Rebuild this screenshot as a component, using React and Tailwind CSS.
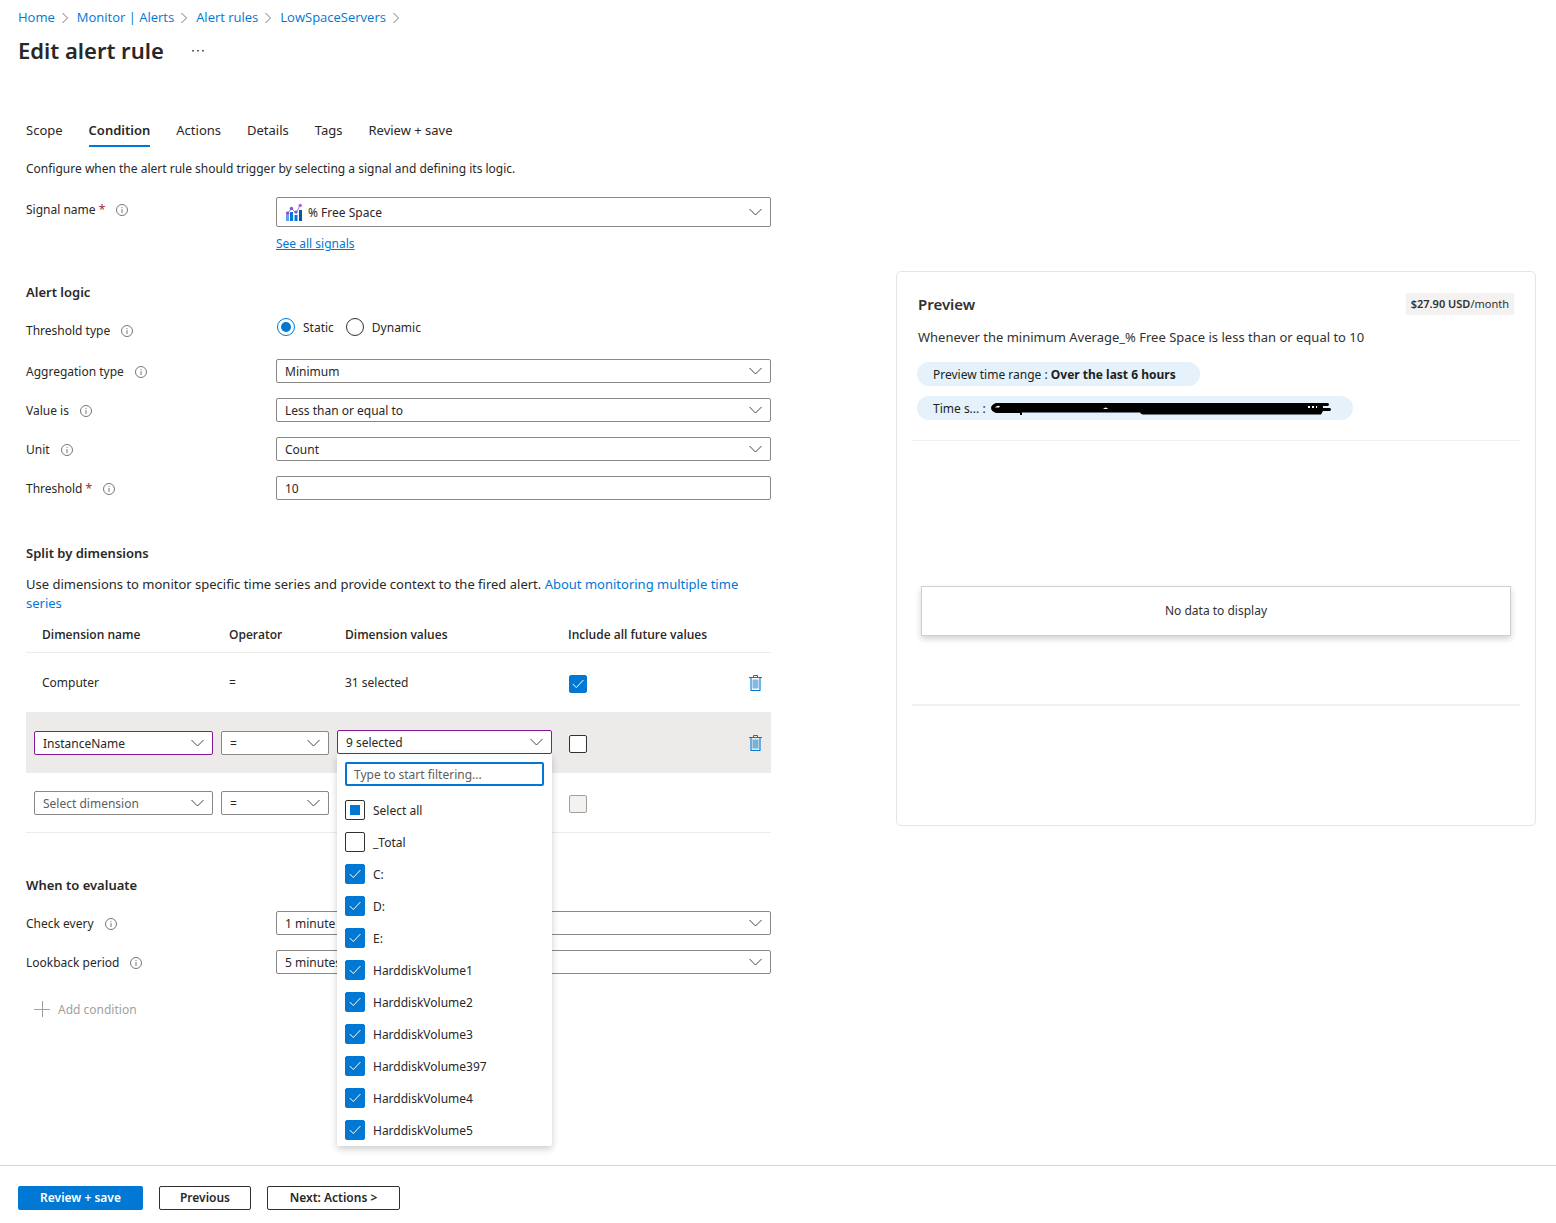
import { useEffect, useRef } from "react";

const breadcrumbs = ["Home", "Monitor | Alerts", "Alert rules", "LowSpaceServers"];

const tabs = ["Scope", "Condition", "Actions", "Details", "Tags", "Review + save"];

const dimensionValues = [
  { name: "Select all", mixed: true },
  { name: "_Total", checked: false },
  { name: "C:", checked: true },
  { name: "D:", checked: true },
  { name: "E:", checked: true },
  { name: "HarddiskVolume1", checked: true },
  { name: "HarddiskVolume2", checked: true },
  { name: "HarddiskVolume3", checked: true },
  { name: "HarddiskVolume397", checked: true },
  { name: "HarddiskVolume4", checked: true },
  { name: "HarddiskVolume5", checked: true },
];

/* ---------- Icons ---------- */

const ChevronDown = ({ className = "" }) => (
  <svg className={`h-[14px] w-[14px] pointer-events-none ${className}`} viewBox="0 0 14 14" fill="none" stroke="#484644" aria-hidden="true">
    <path d="M0.5 4 6.5 10l6-6" />
  </svg>
);

const ChevronRight = () => (
  <svg className="h-3 w-[7px]" viewBox="0 0 7 12" fill="none" stroke="#797775" aria-hidden="true">
    <path d="M0.5 2 5.5 7 0.5 12" />
  </svg>
);

const InfoIcon = () => (
  <svg className="h-3 w-3 shrink-0" viewBox="0 0 12 12" fill="none" stroke="#797775" aria-hidden="true">
    <circle cx="6" cy="6" r="5.5" />
    <path d="M6 5v4M6 3v1" />
  </svg>
);

const MetricIcon = () => (
  <svg className="h-[18px] w-4" viewBox="0 0 16 18" aria-hidden="true">
    <path fill="#5ea0ef" d="M0 12h3v6H0z" />
    <path fill="#0078d4" d="M4 9h3v9H4z" />
    <path fill="#0078d4" d="M8.5 12h3v6h-3z" />
    <path fill="#005ba1" d="M13 7h3v11h-3z" />
    <path fill="none" stroke="#a067e8" d="M1.5 10.5 5.5 5.5l4.500 4.500 4-7.500" />
    <circle cx="1.6" cy="10.3" r="1.7" fill="#8a4fdb" />
    <circle cx="5.5" cy="5.5" r="1.7" fill="#8a4fdb" />
    <circle cx="10" cy="9.1" r="1.7" fill="#8a4fdb" />
    <circle cx="14.2" cy="2.4" r="1.7" fill="#a067e8" />
  </svg>
);

const TrashIcon = () => (
  <svg className="h-4 w-[13px]" viewBox="0 0 13 16" fill="none" aria-hidden="true">
    <path fill="#0078d4" fillOpacity="0.5" d="M3.5 4.5h6v9h-6z" />
    <path stroke="#0078d4" strokeOpacity="0.55" strokeWidth="2" d="M2 3v12M11 3v12" />
    <path stroke="#0078d4" d="M0 2.5h13M4.5 2V.5h4V2M1.5 15.5h10" />
  </svg>
);

/* ---------- Controls ---------- */

const Label = ({ htmlFor, required, children }) => (
  <div className="flex w-[250px] shrink-0 items-center gap-[11px] pt-0.5">
    <label htmlFor={htmlFor}>
      {children}
      {required && <span className="text-[#a4262c]"> *</span>}
    </label>
    <InfoIcon />
  </div>
);

function Select({ id, label, value, border = "border-[#8a8886]", color = "text-[#292827]", className = "" }) {
  return (
    <div className={`relative flex h-6 items-center ${className}`}>
      <select
        id={id}
        aria-label={label}
        defaultValue={value}
        className={`h-full w-full appearance-none rounded-[2px] border bg-white pt-0.5 pr-8 pl-2 ${border} ${color}`}
      >
        <option>{value}</option>
      </select>
      <ChevronDown className="absolute right-2" />
    </div>
  );
}

function Checkbox({ size = "size-5", mixed, ...props }) {
  const ref = useRef(null);

  useEffect(() => {
    ref.current.indeterminate = Boolean(mixed);
  }, [mixed]);

  return (
    <span className={`inline-grid place-items-center ${size}`}>
      <input
        ref={ref}
        type="checkbox"
        className="peer col-start-1 row-start-1 size-full appearance-none rounded-[2px] border border-[#323130] bg-white checked:border-[#0078d4] checked:bg-[#0078d4] disabled:border-[#a19f9d] disabled:bg-[#f3f2f1]"
        {...props}
      />
      {mixed && <span className="pointer-events-none col-start-1 row-start-1 size-[10px] bg-[#0078d4]" />}
      <svg className="pointer-events-none col-start-1 row-start-1 hidden h-[10px] w-3 peer-checked:block" viewBox="0 0 12 10" fill="none" stroke="#fff" aria-hidden="true">
        <path d="M0.8 5 4.3 8.6 11.4 1" />
      </svg>
    </span>
  );
}

const Radio = ({ label, ...props }) => (
  <label className="flex items-center gap-2">
    <span className="grid size-[18px] place-items-center">
      <input
        type="radio"
        className="peer col-start-1 row-start-1 size-full appearance-none rounded-full border border-[#323130] checked:border-[#0078d4]"
        {...props}
      />
      <span className="pointer-events-none col-start-1 row-start-1 hidden size-[10px] rounded-full bg-[#0078d4] peer-checked:block" />
    </span>
    <span className="pt-0.5">{label}</span>
  </label>
);

const DimensionMenu = () => (
  <div className="absolute top-full right-0 left-2 z-10 rounded-b-[2px] bg-white px-2 pt-2 shadow-[0_3px_7px_rgba(0,0,0,0.2)]">
    <input
      type="text"
      aria-label="Filter dimension values"
      placeholder="Type to start filtering..."
      className="mb-2 block h-6 w-full rounded-[2px] border-2 border-[#0078d4] px-[7px] placeholder:text-[#605e5c]"
    />
    {dimensionValues.map((item) => (
      <label key={item.name} className="flex h-8 items-center gap-2">
        <Checkbox mixed={item.mixed} defaultChecked={item.checked} />
        <span className="pt-0.5">{item.name}</span>
      </label>
    ))}
  </div>
);

function DimensionsTable() {
  return (
    <table className="w-full table-fixed text-left">
      <colgroup>
        <col className="w-[187px]" />
        <col className="w-[116px]" />
        <col className="w-[223px]" />
        <col />
        <col className="w-[50px]" />
      </colgroup>
      <thead className="font-['Open_Sans',sans-serif]">
        <tr className="h-9 border-b border-[#edebe9]">
          <th className="pt-0.5 pl-4 font-semibold">Dimension name</th>
          <th className="pt-0.5 pl-4 font-semibold">Operator</th>
          <th className="pt-0.5 pl-4 font-semibold">Dimension values</th>
          <th className="pt-0.5 pl-4 font-semibold">Include all future values</th>
          <td />
        </tr>
      </thead>
      <tbody>
        <tr className="h-[60px] border-b border-[#edebe9]">
          <td className="pt-0.5 pl-4">Computer</td>
          <td className="pt-0.5 pl-4">=</td>
          <td className="pt-0.5 pl-4">31 selected</td>
          <td className="pt-1 pl-[17px]">
            <div className="flex">
              <Checkbox size="size-[18px]" aria-label="Include all future Computer values" defaultChecked />
            </div>
          </td>
          <td className="pt-0.5 pr-[9px]">
            <button type="button" aria-label="Delete Computer" className="ml-auto block">
              <TrashIcon />
            </button>
          </td>
        </tr>
        <tr className="h-[60px] border-b border-[#edebe9] bg-[#edebe9]">
          <td className="pt-0.5 pl-2">
            <Select label="Dimension name" value="InstanceName" border="border-[#881798]" />
          </td>
          <td className="pt-0.5 pl-2">
            <Select label="Operator" value="=" />
          </td>
          <td>
            <div className="relative pl-2">
              <button
                type="button"
                aria-expanded="true"
                className="flex h-6 w-full items-center justify-between rounded-[2px] border border-[#881798] bg-white pr-[7px] pl-2"
              >
                <span className="pt-0.5">9 selected</span>
                <ChevronDown />
              </button>
              <DimensionMenu />
            </div>
          </td>
          <td className="pt-1 pl-[17px]">
            <div className="flex">
              <Checkbox size="size-[18px]" aria-label="Include all future InstanceName values" />
            </div>
          </td>
          <td className="pt-0.5 pr-[9px]">
            <button type="button" aria-label="Delete InstanceName" className="ml-auto block">
              <TrashIcon />
            </button>
          </td>
        </tr>
        <tr className="h-[60px] border-b border-[#edebe9]">
          <td className="pt-0.5 pl-2">
            <Select label="Dimension name" value="Select dimension" color="text-[#605e5c]" />
          </td>
          <td className="pt-0.5 pl-2">
            <Select label="Operator" value="=" />
          </td>
          <td />
          <td className="pt-1 pl-[17px]">
            <div className="flex">
              <Checkbox size="size-[18px]" aria-label="Include all future values" disabled />
            </div>
          </td>
          <td />
        </tr>
      </tbody>
    </table>
  );
}

/* ---------- Preview ---------- */

// Marker strokes that hide the time series name
const Redaction = () => (
  <svg className="h-[14px] w-[341px]" viewBox="0 0 341 14" role="img" aria-label="Redacted">
    <path d="M5 1H337q2 1.5 0 3h-5v2h7q2 1.5 0 3h-7l-2 3.500H152q-2 0-3-2H31v2.500h-2V11H5Q0 9 0 6T5 1Z" />
    <path fill="#fff" d="M4 5.5q3-3 5-1l-1 1ZM112 7q3-3 5 0ZM317 4h2v2h-2ZM321 4h2v2h-2ZM325 4h1v2h-1Z" />
  </svg>
);

const Preview = () => (
  <aside className="mt-[124px] h-[555px] w-[640px] shrink-0 rounded-[5px] border border-[#e5e5e5] px-[15px] text-[#323130]">
    <div className="flex items-center justify-between px-[6px] pt-[21px]">
      <h2 className="text-[15px] leading-5 font-semibold">Preview</h2>
      <p className="bg-[#f3f2f1] px-[5px] text-[11px] leading-[22px]">
        <span className="font-semibold">$27.90 USD</span>/month
      </p>
    </div>
    <p className="mt-3 px-[6px] text-[13px] leading-5">
      Whenever the minimum Average_% Free Space is less than or equal to 10
    </p>
    <div className="mt-[15px] flex flex-col items-start gap-[10px] px-[5px] text-[#201f1e]">
      <button type="button" className="h-6 rounded-full bg-[#e5f1fb] pt-0.5 pr-6 pl-4">
        Preview time range : <b>Over the last 6 hours</b>
      </button>
      <button type="button" className="flex h-6 w-[436px] items-center gap-[5px] rounded-full bg-[#e5f1fb] px-4 pt-0.5">
        Time s... :
        <Redaction />
      </button>
    </div>
    <hr className="mt-5 border-[#f0f0f0]" />
    <p className="mx-[9px] mt-[145px] border border-[#d2d0ce] text-center leading-[48px] shadow-[0_3px_6px_rgba(0,0,0,0.18)]">
      No data to display
    </p>
    <hr className="mt-[68px] border-t-2 border-[#f0f0f0]" />
  </aside>
);

/* ---------- Page ---------- */

export default function App() {
  return (
    <div className="flex min-h-screen flex-col bg-white font-['Noto_Sans',sans-serif] text-[12px] leading-4 text-[#292827]">
      <header className="px-[18px] pt-2">
        <nav aria-label="Breadcrumb" className="flex items-center gap-2 font-['Open_Sans',sans-serif] text-[13px] leading-[18px]">
          {breadcrumbs.map((crumb) => (
            <span key={crumb} className="flex items-center gap-[7px]">
              <a href="#" className="text-[#0078d4]">{crumb}</a>
              <ChevronRight />
            </span>
          ))}
        </nav>
        <div className="mt-2 flex items-center gap-7">
          <h1 className="text-[22px] leading-8 font-semibold">Edit alert rule</h1>
          <button type="button" aria-label="More options">
            <svg className="h-1 w-3" viewBox="0 0 12 4" fill="#605e5c" aria-hidden="true">
              <path d="M0 2h2v1.5H0zM5 2h2v1.500H5zM10 2h2v1.500h-2z" />
            </svg>
          </button>
        </div>
      </header>

      <main className="flex-1 pt-[53px] pr-5 pl-[26px]">
        <div role="tablist" className="flex gap-[26px] text-[13px]">
          {tabs.map((tab) => (
            <button
              key={tab}
              type="button"
              role="tab"
              aria-selected={tab === "Condition"}
              className="border-b-2 border-transparent pt-[3px] pb-[7px] aria-selected:border-[#0078d4] aria-selected:font-semibold"
            >
              {tab}
            </button>
          ))}
        </div>

        <div className="flex items-start gap-[125px]">
          <div className="min-w-0 flex-1">
            <p className="mt-[14px]">
              Configure when the alert rule should trigger by selecting a signal and defining its logic.
            </p>

            <div className="mt-5 flex items-start">
              <div className="pt-[3px]">
                <Label htmlFor="signal" required>Signal name</Label>
              </div>
              <div className="flex-1">
                <div className="relative flex h-[30px] items-center">
                  <select
                    id="signal"
                    defaultValue="% Free Space"
                    className="h-full w-full appearance-none rounded-[2px] border border-[#8a8886] pt-0.5 pr-8 pl-[31px]"
                  >
                    <option>% Free Space</option>
                  </select>
                  <span className="pointer-events-none absolute left-[10px]">
                    <MetricIcon />
                  </span>
                  <ChevronDown className="absolute right-2" />
                </div>
                <a href="#" className="mt-[9px] inline-block text-[#0078d4] underline">See all signals</a>
              </div>
            </div>

            <h2 className="mt-8 text-[13px] font-semibold">Alert logic</h2>
            <div className="mt-[15px] flex flex-col gap-[15px]">
              <div className="flex items-end pb-[5px]">
                <Label htmlFor="static">Threshold type</Label>
                <div className="flex h-6 items-center gap-3 pl-px">
                  <Radio id="static" name="threshold-type" label="Static" defaultChecked />
                  <Radio name="threshold-type" label="Dynamic" />
                </div>
              </div>
              <div className="flex items-center">
                <Label htmlFor="aggregation">Aggregation type</Label>
                <Select id="aggregation" value="Minimum" className="flex-1" />
              </div>
              <div className="flex items-center">
                <Label htmlFor="value-is">Value is</Label>
                <Select id="value-is" value="Less than or equal to" className="flex-1" />
              </div>
              <div className="flex items-center">
                <Label htmlFor="unit">Unit</Label>
                <Select id="unit" value="Count" className="flex-1" />
              </div>
              <div className="flex items-center">
                <Label htmlFor="threshold" required>Threshold</Label>
                <input
                  id="threshold"
                  type="text"
                  defaultValue="10"
                  className="h-6 min-w-0 flex-1 rounded-[2px] border border-[#8a8886] px-2"
                />
              </div>
            </div>

            <h2 className="mt-[45px] text-[13px] font-semibold">Split by dimensions</h2>
            <p className="mt-[14px] mb-[3px] text-[13px] leading-[19px]">
              Use dimensions to monitor specific time series and provide context to the fired alert.{" "}
              <a href="#" className="text-[#0078d4]">About monitoring multiple time series</a>
            </p>
            <DimensionsTable />

            <h2 className="mt-[44px] text-[13px] font-semibold">When to evaluate</h2>
            <div className="mt-[18px] flex flex-col gap-[15px]">
              <div className="flex items-center">
                <Label htmlFor="check-every">Check every</Label>
                <Select id="check-every" value="1 minute" className="flex-1" />
              </div>
              <div className="flex items-center">
                <Label htmlFor="lookback">Lookback period</Label>
                <Select id="lookback" value="5 minutes" className="flex-1" />
              </div>
            </div>

            <button type="button" disabled className="mt-[26px] ml-2 flex items-center gap-2 text-[#a19f9d]">
              <svg className="size-4" viewBox="0 0 16 16" fill="none" stroke="#a19f9d" aria-hidden="true">
                <path d="M8.5 0v16M0 8.5h16" />
              </svg>
              <span className="pt-0.5">Add condition</span>
            </button>
          </div>

          <Preview />
        </div>
      </main>

      <footer className="flex gap-4 border-t border-[#d6d6d6] px-[18px] pt-5 pb-[13px] font-semibold">
        <button type="button" className="h-6 w-[125px] rounded-[2px] bg-[#0078d4] text-white">Review + save</button>
        <button type="button" className="h-6 w-[92px] rounded-[2px] border border-[#323130]">Previous</button>
        <button type="button" className="h-6 w-[133px] rounded-[2px] border border-[#323130]">Next: Actions &gt;</button>
      </footer>
    </div>
  );
}
